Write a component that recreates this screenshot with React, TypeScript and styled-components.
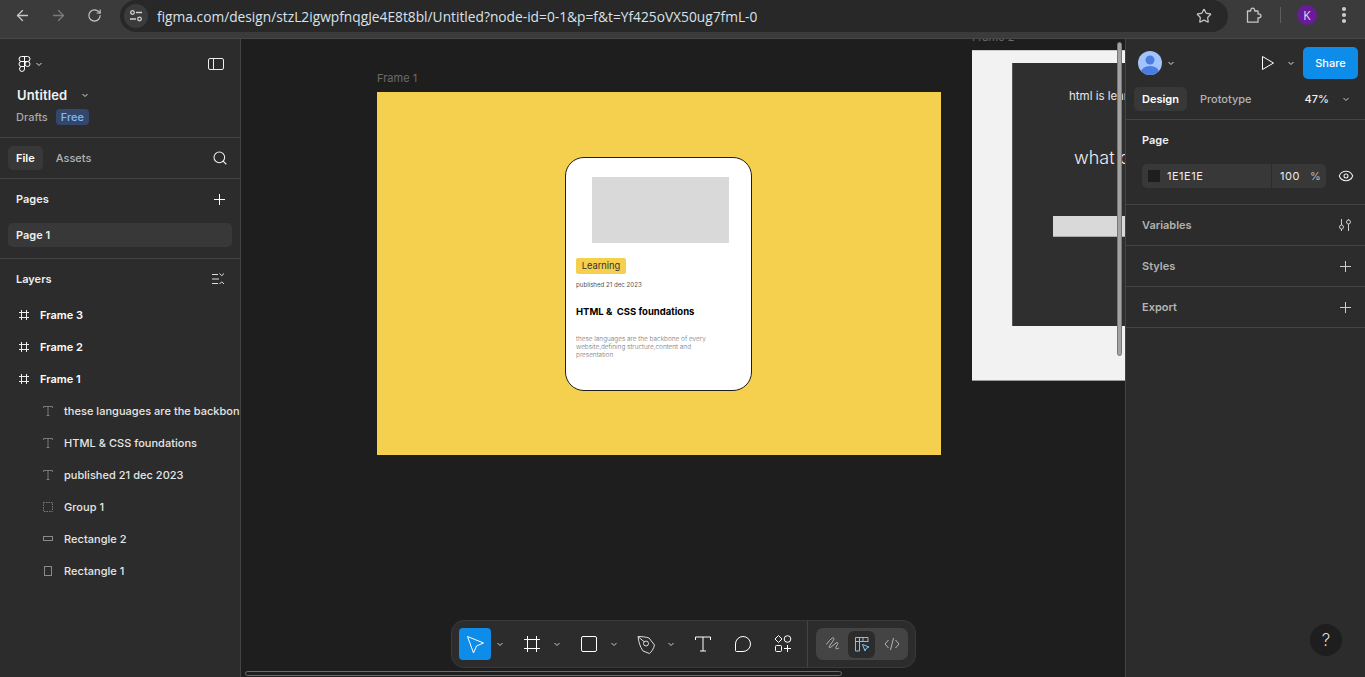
import React from "react";
import styled, { createGlobalStyle } from "styled-components";
import { ArrowLeft, ArrowRight, RotateCw, Star, Search, Eye } from "lucide-react";

const Global = createGlobalStyle`
  html, body { margin: 0; padding: 0; height: 100%; background: #1e1e1e; overflow: hidden; }
  #root { height: 100%; }
  * { box-sizing: border-box; }
`;

const Page = styled.div`
  width: 1365px; height: 677px; display: flex; flex-direction: column; overflow: hidden;
  font-family: Inter, "Liberation Sans", sans-serif; color: #fff;
`;

/* browser chrome */
const Chrome = styled.header`
  height: 39px; flex: none; background: #3b3b3b; border-bottom: 1px solid #474747;
  display: flex; align-items: flex-start; padding-left: 12px;
`;
const NavBtn = styled.div<{ $dim?: boolean }>`
  width: 20px; height: 30px; margin-right: 16px; display: flex; align-items: center; justify-content: center;
  color: ${p => (p.$dim ? "#7b7b7b" : "#c7c7c7")};
`;
const Address = styled.div`
  width: 1108px; height: 32px; border-radius: 16px; background: #282828; flex: none;
  display: flex; align-items: center; padding: 0 16px 0 4px;
`;
const SiteBtn = styled.div`
  width: 24px; height: 24px; border-radius: 50%; background: #3b3b3b; display: flex; align-items: center; justify-content: center;
`;
const Url = styled.span`
  margin-left: 9px; flex: 1; font: 13.75px "Open Sans", "Liberation Sans", sans-serif; color: #d9e2ea;
`;
const ChromeRight = styled.div`
  display: flex; align-items: center; height: 30px; color: #c7c7c7; padding-left: 18px;
`;
const Sep = styled.div`
  width: 1px; height: 16px; background: #5e5e5e; margin: 0 16px 0 17px;
`;
const Avatar = styled.div`
  width: 20px; height: 20px; border-radius: 50%; background: #6a1b9a; color: #e8d8f0; font: 12px "Open Sans", sans-serif;
  display: flex; align-items: center; justify-content: center;
`;
const Dots = styled.div`
  margin-left: 25px; display: flex; flex-direction: column; gap: 2.5px;
  & i { width: 3.5px; height: 3.5px; border-radius: 50%; background: #c7c7c7; display: block; }
`;

/* app */
const Body = styled.div`
  flex: 1; min-height: 0; display: flex; position: relative;
`;
const Side = styled.aside`
  width: 241px; flex: none; background: #2c2c2c; border-right: 1px solid #444; overflow: hidden;
  display: flex; flex-direction: column;
`;
const Section = styled.div<{ $h: number; $line?: boolean }>`
  height: ${p => p.$h}px; flex: none; position: relative;
  border-bottom: ${p => (p.$line ? "1px solid #444" : "none")};
`;
const Head = styled(Section)`
  padding: 16px 16px 0 16px;
`;
const HeadTop = styled.div`
  display: flex; align-items: center; justify-content: space-between; height: 18px;
`;
const LogoWrap = styled.div`
  display: flex; align-items: center; gap: 4px; margin-left: 2px;
`;
const Title = styled.div`
  margin-top: 13px; margin-left: 1px; display: flex; align-items: center; font-size: 13px; font-weight: 600; height: 18px; color: #f2f2f2;
  letter-spacing: 0.1px;
  & svg { margin-left: 14px; }
`;
const SubTitle = styled.div`
  margin-top: 5px; display: flex; align-items: center; gap: 8px; font-size: 11px; font-weight: 500; color: #a8a8a8;
`;
const FreeBadge = styled.span`
  background: #34466b; color: #7cbdf3; border-radius: 4px; height: 16px; padding: 0 5px; display: flex; align-items: center;
  font-size: 11px; font-weight: 500;
`;
const TabRow = styled(Section)`
  display: flex; align-items: center; padding: 0 12px 0 8px; gap: 5px;
`;
const Tab = styled.div<{ $on?: boolean }>`
  height: 24px; padding: 0 8px; border-radius: 5px; display: flex; align-items: center; font-size: 11px;
  font-weight: ${p => (p.$on ? 600 : 500)};
  background: ${p => (p.$on ? "#383838" : "transparent")}; color: ${p => (p.$on ? "#fff" : "#b3b3b3")};
`;
const Spacer = styled.div`flex: 1;`;
const SecHeader = styled.div`
  height: 40px; display: flex; align-items: center; justify-content: space-between; padding: 0 15px 0 16px;
  font-size: 11px; font-weight: 600; color: #eee;
`;
const PageRow = styled.div`
  height: 24px; margin: 4px 8px 0; border-radius: 5px; background: #383838; padding-left: 8px; display: flex; align-items: center;
  font-size: 11px; font-weight: 600; color: #eee;
`;
const Layer = styled.div<{ $top?: boolean }>`
  height: 32px; display: flex; align-items: center; white-space: nowrap; overflow: hidden;
  padding-left: ${p => (p.$top ? 19 : 43)}px; font-size: 11px;
  font-weight: ${p => (p.$top ? 600 : 500)}; color: ${p => (p.$top ? "#fff" : "#e6e6e6")};
  letter-spacing: ${p => (p.$top ? 0 : 0.03)}px;
  & > svg { flex: none; margin-right: 11px; }
`;

/* canvas */
const Canvas = styled.main`
  flex: 1; min-width: 0; position: relative; overflow: hidden; background: #1e1e1e;
`;
const FrameLabel = styled.div<{ $x: number; $y: number }>`
  position: absolute; left: ${p => p.$x}px; top: ${p => p.$y}px; font-size: 11px; color: #6b6b6b; line-height: 14px;
`;
const YellowFrame = styled.section`
  position: absolute; left: 136px; top: 53px; width: 564px; height: 363px; background: #f5cf4e;
  display: flex; align-items: flex-start; justify-content: flex-start; padding: 65px 0 0 188px;
`;
const Card = styled.article`
  width: 187px; height: 234px; background: #fff; border: 1px solid #1e1e1e; border-radius: 19px; padding: 19px 10px 0;
  color: #000; display: flex; flex-direction: column; align-items: flex-start; flex: none;
`;
const Thumb = styled.div`
  width: 137px; height: 66px; background: #d9d9d9; margin-left: 16px; flex: none;
`;
const Tag = styled.div`
  margin-top: 15px; width: 50px; height: 16px; background: #f5cf4e; border-radius: 2px; font-size: 9.3px; line-height: 15px; color: #333;
  display: flex; align-items: flex-start; justify-content: center;
`;
const Pub = styled.div`
  margin-top: 7px; font-size: 6.15px; line-height: 8px; color: #555; white-space: nowrap;
`;
const CardTitle = styled.div`
  margin-top: 17px; font-size: 9.5px; line-height: 12px; font-weight: 700; color: #000; white-space: pre;
`;
const CardText = styled.div`
  margin-top: 17px; width: 150px; font-size: 6.45px; line-height: 8.2px; font-weight: 300; color: #777;
`;
const WhiteFrame = styled.section`
  position: absolute; left: 731px; top: 11px; width: 500px; height: 331px; background: #f2f2f2; border-top: 1px solid #ccc; border-bottom: 1px solid #999;
`;
const DarkInner = styled.div`
  position: absolute; left: 40px; top: 12px; width: 420px; height: 263px; background: #2f2f2f; border-left: 1px solid #555;
`;
const InnerSmall = styled.div`
  position: absolute; left: 56px; top: 26px; font-size: 11.5px; line-height: 14px; color: #e8e8e8; white-space: nowrap;
`;
const InnerBig = styled.div`
  position: absolute; left: 61px; top: 84px; font-size: 18px; line-height: 22px; font-weight: 300; color: #eee; white-space: nowrap;
`;
const InnerBar = styled.div`
  position: absolute; left: 40px; top: 153px; width: 200px; height: 21px; background: #d9d9d9; border-bottom: 1px solid #aaa;
`;
const VScroll = styled.div`
  position: absolute; left: 876px; top: 3px; width: 5px; height: 314px; border-radius: 3px; background: #a3a3a3; border: 1px solid #777;
`;
const HScroll = styled.div`
  position: absolute; left: 4px; top: 632px; width: 597px; height: 5px; border-radius: 3px; border: 1px solid #6a6a6a; background: #1e1e1e;
`;

/* toolbar */
const Toolbar = styled.div`
  position: absolute; left: 210px; top: 581px; width: 465px; height: 48px; background: #2c2c2c; border-radius: 13px;
  border: 1px solid #3a3a3a; display: flex; align-items: center; padding-left: 7px;
`;
const ToolBtn = styled.div<{ $on?: boolean }>`
  width: 32px; height: 32px; border-radius: 4px; display: flex; align-items: center; justify-content: center;
  background: ${p => (p.$on ? "#0d8ce9" : "transparent")}; color: #fff; flex: none;
`;
const ToolCaret = styled.div`
  width: 11px; margin-left: 3px; margin-right: 11px; display: flex; align-items: center; justify-content: center; color: #ccc; flex: none;
`;
const ToolPlain = styled(ToolBtn)`
  margin-right: 8px;
`;
const ToolDivider = styled.div`
  width: 1px; height: 46px; background: #444; flex: none;
`;
const Segment = styled.div`
  margin-left: 8px; width: 92px; height: 32px; background: #444; border-radius: 7px; display: flex; align-items: center; padding-left: 3px; gap: 2px; flex: none;
`;
const SegBtn = styled.div<{ $on?: boolean }>`
  width: 27px; height: 27px; border-radius: 6px; display: flex; align-items: center; justify-content: center;
  background: ${p => (p.$on ? "#2c2c2c" : "transparent")}; color: #b5b5b5; flex: none;
  &:last-child { margin-left: 1px; }
`;

/* right panel */
const Right = styled.aside`
  width: 240px; flex: none; background: #2c2c2c; border-left: 1px solid #444; position: relative; display: flex; flex-direction: column;
`;
const RightTop = styled.div`
  height: 40px; flex: none; display: flex; align-items: flex-end; padding: 0 7px 0 12px;
`;
const ProfileWrap = styled.div`
  display: flex; align-items: center; gap: 5px; height: 32px;
`;
const Profile = styled.div`
  width: 24px; height: 24px; border-radius: 50%; overflow: hidden; flex: none;
`;
const PlayWrap = styled.div`
  display: flex; align-items: center; height: 32px; margin-right: 8px;
  & svg:last-child { margin-left: 12px; }
`;
const ShareBtn = styled.div`
  width: 55px; height: 32px; border-radius: 5px; background: #0d8ce9; color: #fff; font-size: 11px; font-weight: 500;
  display: flex; align-items: center; justify-content: center;
`;
const RightTabs = styled(Section)`
  display: flex; align-items: center; padding: 0 15px 0 8px; gap: 5px;
`;
const Zoom = styled.div`
  display: flex; align-items: center; font-size: 11px; font-weight: 500; color: #eee;
  & svg { margin-left: 13px; color: #ccc; }
`;
const RHead = styled.div`
  height: 16px; margin-top: 12px; padding-left: 16px; font-size: 11px; font-weight: 600; color: #f0f0f0; display: flex; align-items: center;
`;
const Field = styled.div`
  margin: 16px 0 0 16px; display: flex; align-items: center;
`;
const Input = styled.div`
  width: 184px; height: 24px; background: #383838; border-radius: 5px; display: flex; align-items: center; font-size: 11px; color: #eee; letter-spacing: 0.5px;
`;
const Swatch = styled.div`
  width: 12px; height: 12px; background: #1e1e1e; margin-left: 6px; margin-right: 7px; flex: none;
`;
const Hex = styled.div`
  width: 130px; height: 100%; display: flex; align-items: center; flex: none; border-right: 1px solid #2c2c2c;
`;
const Pct = styled.div`
  margin-left: 8px; width: 30px;
`;
const PctSign = styled.div`
  color: #bbb; font-size: 11px; letter-spacing: 0;
`;
const EyeWrap = styled.div`
  margin-left: 12px; display: flex; color: #eee;
`;
const RRow = styled(Section)`
  display: flex; align-items: center; justify-content: space-between; padding: 0 14px 0 16px; font-size: 11px; font-weight: 600; color: #b3b3b3;
  border-bottom: 1px solid #444;
`;
const Question = styled.div`
  position: absolute; right: 23px; top: 585px; width: 32px; height: 32px; border-radius: 50%; background: #1e1e1e; color: #ddd;
  font-size: 17px; font-weight: 300; display: flex; align-items: center; justify-content: center;
`;

const small = { width: 16, height: 16, viewBox: "0 0 16 16", fill: "none", stroke: "currentColor" } as const;

const Caret = ({ c = "#ddd" }: { c?: string }) => (
  <svg width="8" height="8" viewBox="0 0 8 8" fill="none" stroke={c}><path d="M1.5 3l2.5 2.500L6.500 3" /></svg>
);
const PlusIcon = ({ c = "#fff" }: { c?: string }) => (
  <svg width="11" height="11" viewBox="0 0 11 11" fill="none" stroke={c}><path d="M5.500 0v11M0 5.500h11" /></svg>
);
const FrameIcon = () => (
  <svg width="10" height="10" viewBox="0 0 10 10" fill="none" stroke="#eee"><path d="M2.500 0v10M7.500 0v10M0 2.500h10M0 7.500h10" /></svg>
);
const TIcon = () => (
  <svg width="10" height="10" viewBox="0 0 10 10" fill="none" stroke="#7a7a7a"><path d="M.5 2V.5h9V2M5 .5v9M3.500 9.500h3" /></svg>
);
const GroupIcon = () => (
  <svg width="10" height="10" viewBox="0 0 10 10" fill="none" stroke="#7a7a7a" strokeDasharray="1.500 1"><rect x=".5" y=".5" width="9" height="9" /></svg>
);
const RectWide = () => (
  <svg width="10" height="10" viewBox="0 0 10 10" fill="none" stroke="#8a8a8a"><rect x=".5" y="2.500" width="9" height="4" /></svg>
);
const RectTall = () => (
  <svg width="10" height="10" viewBox="0 0 10 10" fill="none" stroke="#8a8a8a"><rect x="1.500" y=".5" width="7" height="9" /></svg>
);
const FigmaLogo = () => (
  <svg width="13" height="16" viewBox="0 0 13 16" fill="none" stroke="#fff">
    <path d="M6.500 .5H3.500a2.500 2.500 0 0 0 0 5h3zM6.500 .5h3a2.500 2.500 0 0 1 0 5h-3zM6.500 5.500h-3a2.500 2.500 0 0 0 0 5h3zM6.500 10.500h-3A2.500 2.500 0 1 0 6.500 13zM12 8a2.500 2.500 0 1 1-5 0 2.500 2.500 0 0 1 5 0z" />
  </svg>
);

const layers: { n: string; i: React.ReactNode; top?: boolean }[] = [
  { n: "Frame 3", i: <FrameIcon />, top: true },
  { n: "Frame 2", i: <FrameIcon />, top: true },
  { n: "Frame 1", i: <FrameIcon />, top: true },
  { n: "these languages are the backbon", i: <TIcon /> },
  { n: "HTML & CSS foundations", i: <TIcon /> },
  { n: "published 21 dec 2023", i: <TIcon /> },
  { n: "Group 1", i: <GroupIcon /> },
  { n: "Rectangle 2", i: <RectWide /> },
  { n: "Rectangle 1", i: <RectTall /> },
];

export default function App() {
  return (
    <Page>
      <Global />
      <Chrome>
        <NavBtn><ArrowLeft size={17} strokeWidth={1.8} /></NavBtn>
        <NavBtn $dim><ArrowRight size={17} strokeWidth={1.8} /></NavBtn>
        <NavBtn><RotateCw size={15} strokeWidth={1.8} /></NavBtn>
        <Address>
          <SiteBtn>
            <svg {...small} strokeWidth="1.300" stroke="#d0d0d0">
              <circle cx="4.500" cy="4.500" r="1.800" /><path d="M8 4.500h6M2 11h6" /><circle cx="11.500" cy="11" r="1.800" />
            </svg>
          </SiteBtn>
          <Url>figma.com/design/stzL2igwpfnqgJe4E8t8bl/Untitled?node-id=0-1&amp;p=f&amp;t=Yf425oVX50ug7fmL-0</Url>
          <Star size={16} color="#c7c7c7" strokeWidth={1.8} />
        </Address>
        <ChromeRight>
          <svg width="17" height="17" viewBox="0 0 17 17" fill="none" stroke="#c7c7c7" strokeWidth="1.300" strokeLinejoin="round">
            <path d="M1.500 4h3.200c-.2-1.800.8-2.800 2-2.800s2.200 1 2 2.800h3.300v3c1.800-.2 3 .6 3 1.900s-1.200 2.100-3 1.900v4.400H1.500z" />
          </svg>
          <Sep />
          <Avatar>K</Avatar>
          <Dots><i /><i /><i /></Dots>
        </ChromeRight>
      </Chrome>
      <Body>
        <Side>
          <Head $h={99} $line>
            <HeadTop>
              <LogoWrap><FigmaLogo /><Caret /></LogoWrap>
              <svg width="16" height="12" viewBox="0 0 16 12" fill="none" stroke="#eee"><rect x=".5" y=".5" width="15" height="11" rx="1.500" /><path d="M5.500 .5v11" /></svg>
            </HeadTop>
            <Title>Untitled<Caret /></Title>
            <SubTitle>Drafts<FreeBadge>Free</FreeBadge></SubTitle>
          </Head>
          <TabRow $h={41} $line>
            <Tab $on>File</Tab>
            <Tab>Assets</Tab>
            <Spacer />
            <Search size={16} strokeWidth={1.6} color="#eee" />
          </TabRow>
          <Section $h={80} $line>
            <SecHeader>Pages<PlusIcon /></SecHeader>
            <PageRow>Page 1</PageRow>
          </Section>
          <SecHeader>
            Layers
            <svg width="13" height="12" viewBox="0 0 13 12" fill="none" stroke="#ddd"><path d="M0 1.500h6M0 6h7M0 10.500h6M7.500 .5l2.200 2.200L12 .5M7.500 11l2.200-2.200L12 11" /></svg>
          </SecHeader>
          <div>
            {layers.map(l => (
              <Layer key={l.n} $top={l.top}>{l.i}{l.n}</Layer>
            ))}
          </div>
        </Side>
        <Canvas>
          <FrameLabel $x={136} $y={32}>Frame 1</FrameLabel>
          <YellowFrame>
            <Card>
              <Thumb />
              <Tag>Learning</Tag>
              <Pub>published 21 dec 2023</Pub>
              <CardTitle>{"HTML &  CSS foundations"}</CardTitle>
              <CardText>these languages are the backbone of every website,defining structure,content and presentation</CardText>
            </Card>
          </YellowFrame>
          <FrameLabel $x={731} $y={-9}>Frame 2</FrameLabel>
          <WhiteFrame>
            <DarkInner>
              <InnerSmall>html is lear</InnerSmall>
              <InnerBig>what c</InnerBig>
              <InnerBar />
            </DarkInner>
          </WhiteFrame>
          <VScroll />
          <HScroll />
          <Toolbar>
            <ToolBtn $on>
              <svg width="20" height="20" viewBox="0 0 20 20" fill="none" stroke="#fff" strokeLinejoin="round"><path d="M2.500 2.500l16 6.500-7 3-3 7z" /></svg>
            </ToolBtn>
            <ToolCaret><Caret c="#ccc" /></ToolCaret>
            <ToolBtn>
              <svg width="16" height="16" viewBox="0 0 16 16" fill="none" stroke="#fff"><path d="M3.500 0v16M12.500 0v16M0 3.500h16M0 12.500h16" /></svg>
            </ToolBtn>
            <ToolCaret><Caret c="#ccc" /></ToolCaret>
            <ToolBtn>
              <svg width="18" height="18" viewBox="0 0 18 18" fill="none" stroke="#fff"><rect x="1.500" y="1.500" width="15" height="15" rx="1.500" /></svg>
            </ToolBtn>
            <ToolCaret><Caret c="#ccc" /></ToolCaret>
            <ToolBtn>
              <svg width="20" height="20" viewBox="0 0 20 20" fill="none" stroke="#ddd" strokeLinejoin="round"><path d="M2 2.500C6 2.500 10 3 13 4l5.500 7c-1 4-3 7-5 8.500L7 17C4 13 2.500 7 2 2.500z" /><circle cx="10" cy="9.500" r="2.500" /><path d="M2.500 3l5.700 4.800" /></svg>
            </ToolBtn>
            <ToolCaret><Caret c="#ccc" /></ToolCaret>
            <ToolPlain>
              <svg width="18" height="18" viewBox="0 0 18 18" fill="none" stroke="#fff"><path d="M1.500 5V2h15v3M9 2v14M6 16h6" /></svg>
            </ToolPlain>
            <ToolPlain>
              <svg width="18" height="18" viewBox="0 0 18 18" fill="none" stroke="#fff"><path d="M9 1.500a7.500 7.500 0 1 1 0 15H2.500a1 1 0 0 1-1-1V9A7.500 7.500 0 0 1 9 1.500z" /></svg>
            </ToolPlain>
            <ToolPlain>
              <svg width="20" height="20" viewBox="0 0 20 20" fill="none" stroke="#fff"><path d="M5.500 1.500l3.500 3.500-3.500 3.500-3.500-3.500z" /><circle cx="14.500" cy="5" r="3.300" /><rect x="2.500" y="11.500" width="6" height="6" rx="1" /><path d="M14.500 11v7M11 14.500h7" /></svg>
            </ToolPlain>
            <ToolDivider />
            <Segment>
              <SegBtn>
                <svg width="16" height="16" viewBox="0 0 16 16" fill="none" stroke="#b5b5b5"><path d="M1.500 8.500c2-3 4-5.500 6-6.500 1.500-.5 2 .8 1 2.200L4.500 10c-1 1.500 0 2.300 1.200 1.300L11 7c1.500-1 2.500 0 1.500 1.500l-1.800 3c-.5 1.300.8 1.800 3.300.5" /></svg>
              </SegBtn>
              <SegBtn $on>
                <svg width="16" height="16" viewBox="0 0 16 16" fill="none" stroke="#7cc4f8"><path d="M5.500 15H1.500V1.500H14V6M1.500 5.500H14M5.500 1.500V15M9 1.500v4" /><path d="M8.500 8.500l6.500 2.500-3 1.500-1 2.500z" /></svg>
              </SegBtn>
              <SegBtn>
                <svg width="16" height="14" viewBox="0 0 16 14" fill="none" stroke="#b5b5b5"><path d="M4.500 3L1 7l3.500 4M11.500 3L15 7l-3.500 4M9.500 1l-3 12" /></svg>
              </SegBtn>
            </Segment>
          </Toolbar>
        </Canvas>
        <Right>
          <RightTop>
            <ProfileWrap>
              <Profile>
                <svg width="24" height="24" viewBox="0 0 24 24">
                  <rect width="24" height="24" fill="#a2c3fb" />
                  <circle cx="12" cy="9" r="4.500" fill="#4b7de0" />
                  <ellipse cx="12" cy="21" rx="9" ry="6" fill="#4b7de0" />
                </svg>
              </Profile>
              <Caret />
            </ProfileWrap>
            <Spacer />
            <PlayWrap>
              <svg width="14" height="16" viewBox="0 0 14 16" fill="none" stroke="#fff"><path d="M1.500 1.500l11 6.500-11 6.500z" strokeLinejoin="round" /></svg>
              <Caret />
            </PlayWrap>
            <ShareBtn>Share</ShareBtn>
          </RightTop>
          <RightTabs $h={41} $line>
            <Tab $on>Design</Tab>
            <Tab>Prototype</Tab>
            <Spacer />
            <Zoom>47%<Caret c="#ccc" /></Zoom>
          </RightTabs>
          <Section $h={85} $line>
            <RHead>Page</RHead>
            <Field>
              <Input>
                <Hex><Swatch />1E1E1E</Hex>
                <Pct>100</Pct>
                <PctSign>%</PctSign>
              </Input>
              <EyeWrap><Eye size={16} strokeWidth={1.6} /></EyeWrap>
            </Field>
          </Section>
          <RRow $h={41}>
            Variables
            <svg width="12" height="14" viewBox="0 0 12 14" fill="none" stroke="#ccc"><path d="M2.500 1v6M2.500 11v2M9.500 1v1M9.500 6v7" /><circle cx="2.500" cy="9" r="2" /><circle cx="9.500" cy="4" r="2" /></svg>
          </RRow>
          <RRow $h={41}>Styles<PlusIcon c="#ccc" /></RRow>
          <RRow $h={41}>Export<PlusIcon c="#ccc" /></RRow>
          <Question>?</Question>
        </Right>
      </Body>
    </Page>
  );
}
